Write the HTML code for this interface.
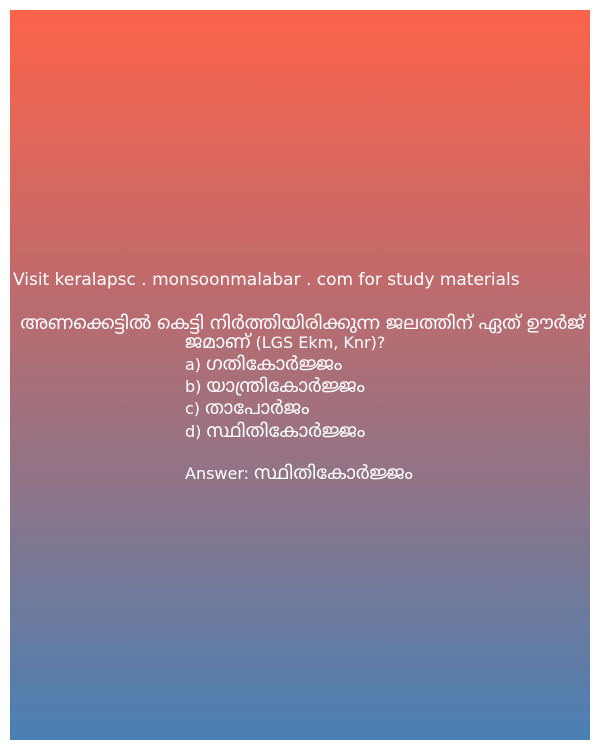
<!DOCTYPE html>
<html><head><meta charset="utf-8"><style>
html,body{margin:0;padding:0;width:600px;height:750px;background:#fff;overflow:hidden}
.box{position:absolute;left:10px;top:10px;width:580px;height:730px;background:linear-gradient(#fc634a,#c46a6a 35%,#8f7487 65%,#4a80b4)}
.t{position:absolute;color:#fff;font-family:"DejaVu Sans","Liberation Sans","Noto Sans Malayalam",sans-serif;font-size:16px;white-space:nowrap;line-height:22px}
.m{font-size:18.5px}
</style></head><body>
<div class="box"></div>
<div class="t" style="left:13px;top:269px;font-size:17px">Visit keralapsc . monsoonmalabar . com for study materials</div>
<div class="t m" style="left:10px;top:313px;width:585px;text-align:center">അണക്കെട്ടിൽ കെട്ടി നിർത്തിയിരിക്കുന്ന ജലത്തിന് ഏത് ഊർജ്</div>
<div class="t" style="left:185px;top:332px"><span class="m">ജമാണ്</span> (LGS Ekm, Knr)?</div>
<div class="t" style="left:185px;top:354px">a) <span class="m">ഗതികോർജ്ജം</span></div>
<div class="t" style="left:185px;top:376px">b) <span class="m">യാന്ത്രികോർജ്ജം</span></div>
<div class="t" style="left:185px;top:398px">c) <span class="m">താപോർജം</span></div>
<div class="t" style="left:185px;top:421px">d) <span class="m">സ്ഥിതികോർജ്ജം</span></div>
<div class="t" style="left:185px;top:463px">Answer: <span class="m">സ്ഥിതികോർജ്ജം</span></div>
</body></html>
